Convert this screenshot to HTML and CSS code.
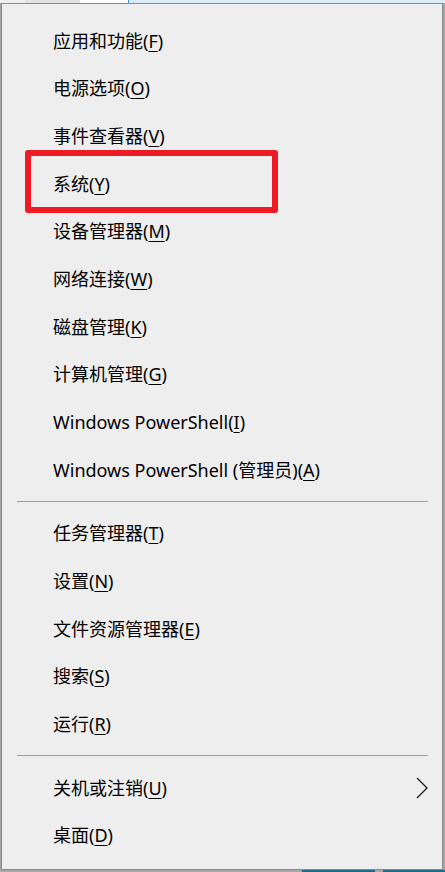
FILE: index.html
```html
<!DOCTYPE html>
<html lang="zh-CN">
<head>
  <meta charset="UTF-8">
  <meta name="viewport" content="width=device-width, initial-scale=1.0">
  <title>快速链接菜单</title>
  <link rel="stylesheet" href="styles.css">
</head>
<body>
  <div class="menu">
    <ul class="menu-list">
      <li class="menu-item"><span class="label">应用和功能(<u>F</u>)</span></li>
      <li class="menu-item"><span class="label">电源选项(<u>O</u>)</span></li>
      <li class="menu-item"><span class="label">事件查看器(<u>V</u>)</span></li>
      <li class="menu-item"><span class="label">系统(<u>Y</u>)</span><span class="mark"></span></li>
      <li class="menu-item"><span class="label">设备管理器(<u>M</u>)</span></li>
      <li class="menu-item"><span class="label">网络连接(<u>W</u>)</span></li>
      <li class="menu-item"><span class="label">磁盘管理(<u>K</u>)</span></li>
      <li class="menu-item"><span class="label">计算机管理(<u>G</u>)</span></li>
      <li class="menu-item"><span class="label">Windows PowerShell(<u>I</u>)</span></li>
      <li class="menu-item"><span class="label">Windows PowerShell (管理员)(<u>A</u>)</span></li>
      <li class="separator"></li>
      <li class="menu-item"><span class="label">任务管理器(<u>T</u>)</span></li>
      <li class="menu-item"><span class="label">设置(<u>N</u>)</span></li>
      <li class="menu-item"><span class="label">文件资源管理器(<u>E</u>)</span></li>
      <li class="menu-item"><span class="label">搜索(<u>S</u>)</span></li>
      <li class="menu-item"><span class="label">运行(<u>R</u>)</span></li>
      <li class="separator"></li>
      <li class="menu-item">
        <span class="label">关机或注销(<u>U</u>)</span>
        <svg class="chevron" width="12" height="22" viewBox="0 0 12 22">
          <path d="M1 1 L11 11 L1 21" fill="none" stroke="#1a1a1a" stroke-width="1.3"/>
        </svg>
      </li>
      <li class="menu-item"><span class="label">桌面(<u>D</u>)</span></li>
    </ul>
  </div>
</body>
</html>
```

FILE: styles.css
```css
/* Reset */
* {
  box-sizing: border-box;
  margin: 0;
  padding: 0;
}

/* Desktop behind the menu */
body {
  font-family: 'Noto Sans', 'Noto Sans CJK SC', sans-serif;
  color: #000;
  width: 445px;
  height: 872px;
  overflow: hidden;
  padding: 3px 2px 2px 1px;
  background:
    linear-gradient(to right, #f0f0f0 0 25px, #e2e2e2 25px 80px, #ffffff 80px 128px, #3d8fd6 128px 129px, #dcedf8 129px) top / 100% 3px no-repeat,
    linear-gradient(to right, #a8a8a8 0 302px, #1f6a8a 302px 375px, #a8a8a8 375px 383px, #1f6a8a 383px) bottom / 100% 2px no-repeat,
    #9fa6a6;
}

/* Menu */
.menu {
  width: 442px;
  height: 867px;
  background-color: #eeeeee;
  border: 1px solid #8a8a8a;
}

.menu-list {
  list-style: none;
  padding: 13px 0 10px;
}

.menu-item {
  position: relative;
  display: flex;
  align-items: center;
  justify-content: space-between;
  height: 47.67px;
  padding: 0 14px 0 51px;
  font-size: 18px;
  line-height: 1;
  white-space: nowrap;
}

.menu-item u {
  text-decoration-thickness: 1px;
  text-underline-offset: 3px;
}

.separator {
  height: 1px;
  margin: 7px 14px 8px 15px;
  background-color: #a0a0a0;
}

.chevron {
  display: block;
}

/* Red annotation box */
.mark {
  position: absolute;
  left: 23px;
  top: -10px;
  width: 253px;
  height: 63px;
  border: 6px solid #ed1c24;
  border-radius: 3px;
}
```
